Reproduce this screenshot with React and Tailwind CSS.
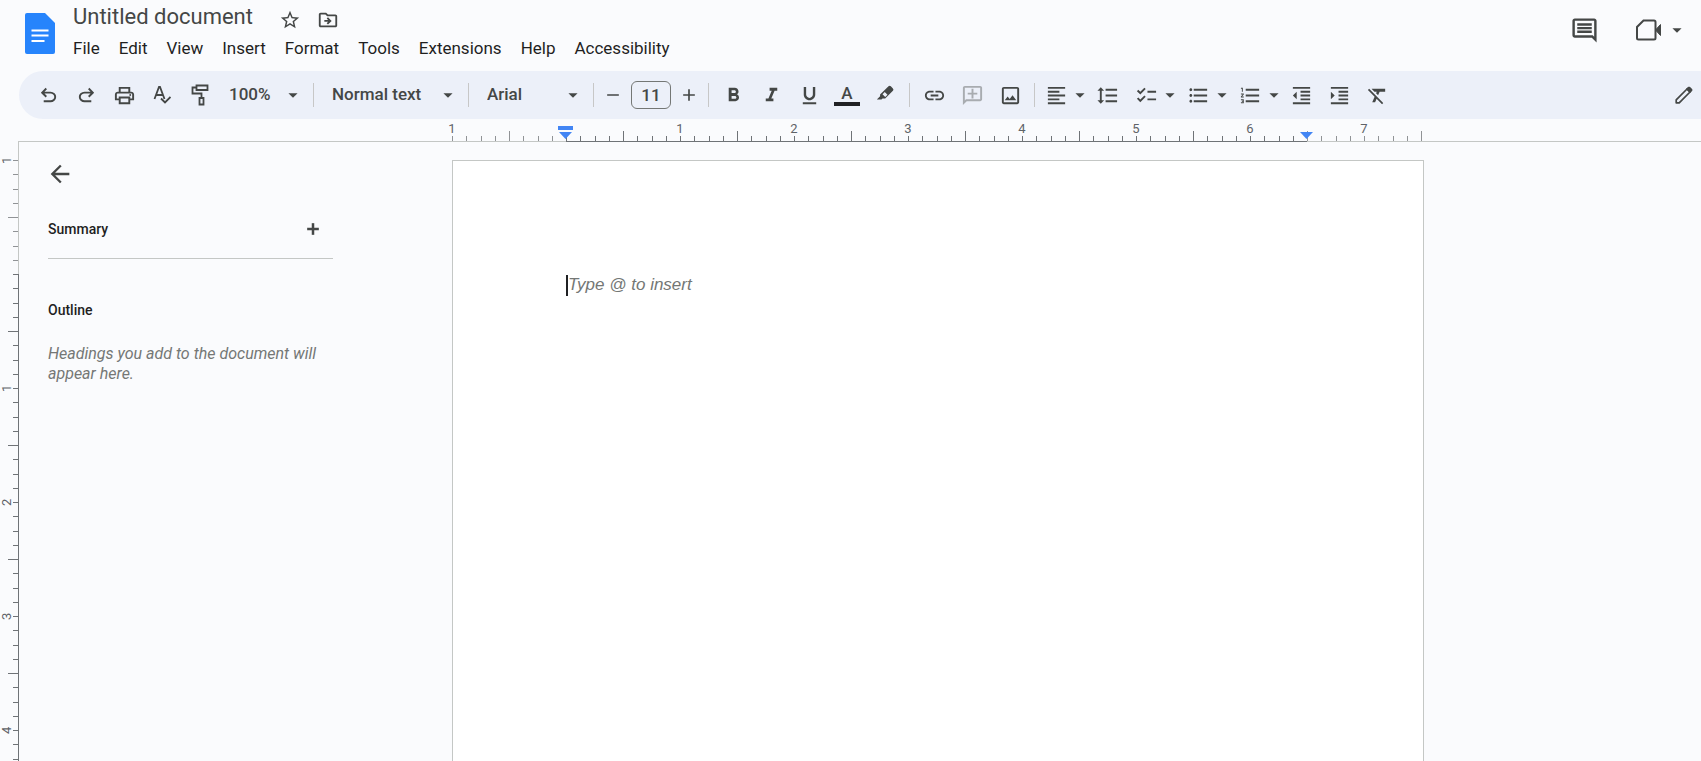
import React, { useState } from 'react';
import { Plus } from 'lucide-react';
import {
  MdAdd,
  MdArrowBack,
  MdArrowDropDown,
  MdChecklist,
  MdFormatAlignLeft,
  MdFormatBold,
  MdFormatClear,
  MdFormatIndentDecrease,
  MdFormatIndentIncrease,
  MdFormatItalic,
  MdFormatLineSpacing,
  MdFormatListBulleted,
  MdFormatListNumbered,
  MdFormatUnderlined,
  MdLink,
  MdOutlineAddComment,
  MdOutlineDriveFileMove,
  MdOutlineImage,
  MdOutlineInsertComment,
  MdOutlinePrint,
  MdRemove,
  MdStarOutline,
} from 'react-icons/md';

const MENUS = ['File', 'Edit', 'View', 'Insert', 'Format', 'Tools', 'Extensions', 'Help', 'Accessibility'];

// Both rulers are divided in eighths of an inch, and start one inch before zero
const H_TICKS = Array.from({ length: 68 }, (_, i) => i - 8);
const V_TICKS = Array.from({ length: 44 }, (_, i) => i - 8);

const DocsLogo = () => (
  <svg viewBox="0 0 30 41" className="w-[30px] h-[41px]">
    <path d="M2 0h18l10 10v29a2 2 0 0 1-2 2H2a2 2 0 0 1-2-2V2a2 2 0 0 1 2-2z" fill="#2684fc" />
    <path d="M6.500 17.500h17M6.500 22.500h17M6.500 28h13" stroke="#fff" strokeWidth="2" />
  </svg>
);

const UndoIcon = ({ className }) => (
  <svg viewBox="0 -960 960 960" fill="currentColor" className={className}>
    <path d="M280-200v-80h284q63 0 109.500-40T720-420q0-60-46.500-100T564-560H312l104 104-56 56-200-200 200-200 56 56-104 104h252q97 0 169.500 63T800-420q0 94-72.500 157T564-200H280Z" />
  </svg>
);

const SpellcheckIcon = ({ className }) => (
  <svg viewBox="0 0 18 20" fill="none" stroke="currentColor" strokeWidth="1.8" className={className}>
    <path d="M1.500 14 6 2h1l4.500 12M3.200 10h6.600" />
    <path d="m8 13.500 4 4 5.500-5.500" />
  </svg>
);

const PaintFormatIcon = ({ className }) => (
  <svg viewBox="0 0 18 22" fill="none" stroke="currentColor" strokeWidth="1.8" className={className}>
    <path d="M5.500 1.500h11v4.500h-11z" />
    <path d="M5.500 3.500H1.500V9.500h9V14" />
    <path d="M8.500 14h4v6.500h-4z" />
  </svg>
);

const HighlightIcon = ({ className }) => (
  <svg viewBox="0 0 24 24" fill="currentColor" className={className}>
    <path
      fillRule="evenodd"
      d="M16.200 1.600a2 2 0 0 1 2.800 0l2.500 2.500a2 2 0 0 1 0 2.800l-9.300 9.300H9l-1.200 1.300H2.200l3.900-4v-2.200zM9 11l3.300 3.300 2.700-2.700-3.300-3.300z"
    />
  </svg>
);

const PencilIcon = ({ className }) => (
  <svg viewBox="0 0 18 18" fill="none" stroke="currentColor" strokeWidth="1.700" strokeLinejoin="round" className={className}>
    <path d="M1.200 16.800v-3L12 3l3 3L4.200 16.800z" />
    <path d="m12 3 1.500-1.500h1L16.500 3.500v1L15 6z" fill="currentColor" />
  </svg>
);

const MeetIcon = ({ className }) => (
  <svg viewBox="0 0 26 22" fill="none" stroke="currentColor" strokeWidth="2" className={className}>
    <path d="M7.500 1.500H18A1.500 1.500 0 0 1 19.500 3v16a1.500 1.500 0 0 1-1.500 1.500H2.500A1.500 1.500 0 0 1 1 19V8z" />
    <path d="M19.500 11l5-5.500v11z" fill="currentColor" strokeWidth="1" />
  </svg>
);

const ToolButton = ({ label, disabled, children }) => (
  <button
    aria-label={label}
    disabled={disabled}
    className="w-8 h-8 mx-[3px] shrink-0 flex items-center justify-center rounded hover:bg-black/5 disabled:opacity-40"
  >
    {children}
  </button>
);

const MenuButton = ({ label, children }) => (
  <div className="flex items-center shrink-0">
    <button aria-label={label} className="w-8 h-8 flex items-center justify-center rounded-l hover:bg-black/5">
      {children}
    </button>
    <button aria-label={`${label} menu`} className="w-4 h-8 flex items-center justify-center rounded-r hover:bg-black/5">
      <MdArrowDropDown className="w-[22px] h-[22px] shrink-0" />
    </button>
  </div>
);

const ToolSelect = ({ label, options, className }) => (
  <label className={`grid items-center shrink-0 mr-1 ${className}`}>
    <select
      aria-label={label}
      className="[grid-area:1/1] appearance-none bg-transparent h-8 px-[10px] text-[17px] font-medium outline-none rounded hover:bg-black/5"
    >
      {options.map((option) => (
        <option key={option}>{option}</option>
      ))}
    </select>
    <MdArrowDropDown className="[grid-area:1/1] justify-self-end w-[22px] h-[22px] pointer-events-none" />
  </label>
);

const Divider = () => <div className="w-px h-6 mx-[5px] shrink-0 bg-[#c7c7c7]" />;

const Header = () => (
  <header className="flex justify-between h-[71px] shrink-0 pl-[25px] pr-[13px]">
    <div className="flex gap-[18px]">
      <div className="pt-[13px]">
        <DocsLogo />
      </div>
      <div>
        <div className="flex items-center h-9">
          <h1 className="text-[22px] leading-7 pb-0.5 text-[#444746]">Untitled document</h1>
          <button aria-label="Star" className="ml-[26px] pt-[3px] text-[#444746]">
            <MdStarOutline className="w-[22px] h-[22px]" />
          </button>
          <button aria-label="Move" className="ml-4 pt-[3px] text-[#444746]">
            <MdOutlineDriveFileMove className="w-[22px] h-[22px]" />
          </button>
        </div>
        <nav className="flex gap-[19px] text-[17px] leading-6">
          {MENUS.map((menu) => (
            <button key={menu}>{menu}</button>
          ))}
        </nav>
      </div>
    </div>
    <div className="flex items-center h-[60px] text-[#444746]">
      <button aria-label="Comments">
        <MdOutlineInsertComment className="w-[29px] h-[29px]" />
      </button>
      <button aria-label="Join a call" className="flex items-center ml-[37px]">
        <MeetIcon className="w-[26px] h-[22px]" />
        <MdArrowDropDown className="ml-1 w-[22px] h-[22px]" />
      </button>
    </div>
  </header>
);

const Toolbar = () => {
  const [fontSize, setFontSize] = useState(11);
  const icon = 'w-[23px] h-[23px]';

  return (
    <div className="flex items-center h-12 shrink-0 ml-[19px] pl-[10px] rounded-l-full bg-[#ecf0f9] text-[#444746] overflow-hidden">
      <ToolButton label="Undo"><UndoIcon className={icon} /></ToolButton>
      <ToolButton label="Redo"><UndoIcon className={`${icon} -scale-x-100`} /></ToolButton>
      <ToolButton label="Print"><MdOutlinePrint className={icon} /></ToolButton>
      <ToolButton label="Spelling"><SpellcheckIcon className="w-[18px] h-5" /></ToolButton>
      <ToolButton label="Paint format"><PaintFormatIcon className="w-[18px] h-[22px]" /></ToolButton>
      <ToolSelect label="Zoom" options={['100%', '75%', '50%']} className="w-[85px]" />
      <Divider />
      <ToolSelect label="Styles" options={['Normal text', 'Title', 'Heading 1']} className="w-[137px] ml-[3px]" />
      <Divider />
      <ToolSelect label="Font" options={['Arial', 'Georgia', 'Verdana']} className="w-[107px] ml-[3px]" />
      <Divider />
      <div className="flex items-center gap-[7px] mx-[3px] shrink-0">
        <button
          aria-label="Decrease font size"
          onClick={() => setFontSize(fontSize - 1)}
          className="w-[22px] flex justify-center"
        >
          <MdRemove className="w-5 h-5" />
        </button>
        <input
          aria-label="Font size"
          value={fontSize}
          onChange={(e) => setFontSize(Number(e.target.value) || 1)}
          className="w-10 h-7 rounded-md border border-[#747775] bg-transparent text-center text-[17px] font-medium outline-none"
        />
        <button
          aria-label="Increase font size"
          onClick={() => setFontSize(fontSize + 1)}
          className="w-[22px] flex justify-center"
        >
          <MdAdd className="w-5 h-5" />
        </button>
      </div>
      <Divider />
      <ToolButton label="Bold"><MdFormatBold className={icon} /></ToolButton>
      <ToolButton label="Italic"><MdFormatItalic className={icon} /></ToolButton>
      <ToolButton label="Underline"><MdFormatUnderlined className={icon} /></ToolButton>
      <ToolButton label="Text color">
        <span className="w-[26px] border-b-4 border-[#202124] text-center text-[17px] leading-[18px] font-medium">A</span>
      </ToolButton>
      <ToolButton label="Highlight color"><HighlightIcon className="w-5 h-5" /></ToolButton>
      <Divider />
      <ToolButton label="Insert link"><MdLink className={icon} /></ToolButton>
      <ToolButton label="Add comment" disabled><MdOutlineAddComment className={`${icon} -scale-x-100`} /></ToolButton>
      <ToolButton label="Insert image"><MdOutlineImage className={icon} /></ToolButton>
      <Divider />
      <MenuButton label="Align"><MdFormatAlignLeft className={icon} /></MenuButton>
      <ToolButton label="Line spacing"><MdFormatLineSpacing className={icon} /></ToolButton>
      <div className="flex gap-1 ml-1">
        <MenuButton label="Checklist"><MdChecklist className={icon} /></MenuButton>
        <MenuButton label="Bulleted list"><MdFormatListBulleted className={icon} /></MenuButton>
        <MenuButton label="Numbered list"><MdFormatListNumbered className={icon} /></MenuButton>
      </div>
      <ToolButton label="Decrease indent"><MdFormatIndentDecrease className={icon} /></ToolButton>
      <ToolButton label="Increase indent"><MdFormatIndentIncrease className={icon} /></ToolButton>
      <ToolButton label="Clear formatting"><MdFormatClear className={icon} /></ToolButton>
      <button aria-label="Editing mode" className="ml-auto mr-2">
        <PencilIcon className="w-[18px] h-[18px]" />
      </button>
    </div>
  );
};

const HorizontalRuler = () => (
  <div className="flex h-[23px] shrink-0 ml-[18px] text-[13px] text-[#5f6368]">
    <div className="w-[434px] shrink-0 border-b border-[#c4c7c5]" />
    <div className="relative flex w-[969px] shrink-0">
      {H_TICKS.map((n) => {
        const active = n >= 0 && n < 52;
        return (
          <div
            key={n}
            className={`flex-1 min-w-0 flex flex-col justify-end border-b ${active ? 'border-[#6f7377]' : 'border-[#c4c7c5]'}`}
          >
            {n % 8 === 0 && n !== 0 && (
              <span className="w-4 -ml-2 text-center leading-[14px]">{Math.abs(n / 8)}</span>
            )}
            <div className={`w-px ${n % 8 !== 0 && n % 4 === 0 ? 'h-[10px]' : 'h-[5px]'} ${active ? 'bg-[#6f7377]' : 'bg-[#909396]'}`} />
          </div>
        );
      })}
      {/* Indent markers */}
      <svg viewBox="0 0 15 14" className="absolute left-[106px] top-[7px] w-[15px] h-[14px]" fill="#4285f4">
        <path d="M0 0h15v4H0zM1 6h13l-6.500 7z" />
      </svg>
      <svg viewBox="0 0 15 14" className="absolute left-[847px] top-[7px] w-[15px] h-[14px]" fill="#4285f4">
        <path d="M1 6h13l-6.500 7z" />
      </svg>
    </div>
    <div className="flex-1 flex items-end border-b border-[#c4c7c5]">
      <div className="w-px h-[10px] bg-[#909396]" />
    </div>
  </div>
);

const VerticalRuler = () => (
  <div className="w-[19px] shrink-0 flex flex-col text-[13px] text-[#5f6368] overflow-hidden">
    <div className="h-[18px] shrink-0 border-r border-[#c4c7c5]" />
    <div className="h-[627px] shrink-0 flex flex-col">
      {V_TICKS.map((n) => (
        <div
          key={n}
          className={`flex-1 min-h-0 flex items-start justify-end border-r ${n >= 0 ? 'border-[#6f7377]' : 'border-[#c4c7c5]'}`}
        >
          {n % 8 === 0 && n !== 0 && (
            <span className="h-4 -mt-2 leading-3 text-center [writing-mode:vertical-rl] rotate-180">{Math.abs(n / 8)}</span>
          )}
          <div className={`h-px shrink-0 ${n % 8 !== 0 && n % 4 === 0 ? 'w-[10px]' : 'w-[5px]'} ${n >= 0 ? 'bg-[#6f7377]' : 'bg-[#909396]'}`} />
        </div>
      ))}
    </div>
    <div className="flex-1 border-r border-[#6f7377]" />
  </div>
);

const OutlinePanel = () => (
  <aside className="w-[433px] shrink-0 pl-[29px] pt-[18px]">
    <button aria-label="Close outline" className="block -ml-0.5 text-[#444746]">
      <MdArrowBack className="w-7 h-7" />
    </button>
    <div className="w-[285px]">
      <div className="flex items-center justify-between h-[71px] pt-6 pb-3 border-b border-[#c4c7c5]">
        <h2 className="text-sm font-medium">Summary</h2>
        <button aria-label="Add summary" className="mr-[10px] text-[#444746]">
          <Plus className="w-5 h-5" strokeWidth={3} strokeLinecap="butt" />
        </button>
      </div>
      <h2 className="mt-[41px] text-sm font-medium">Outline</h2>
      <p className="mt-6 text-base leading-5 italic text-[#747775]">Headings you add to the document will appear here.</p>
    </div>
  </aside>
);

export default function App() {
  return (
    <div className="flex flex-col h-screen overflow-hidden bg-[#fafbfd] text-[#1f1f1f] font-['Roboto',sans-serif]">
      <Header />
      <Toolbar />
      <HorizontalRuler />
      <div className="flex flex-1 min-h-0">
        <VerticalRuler />
        <OutlinePanel />
        <main className="flex w-[972px] shrink-0 mt-[18px] pt-[114px] px-[113px] border border-b-0 border-[#c4c7c5] bg-white">
          <span className="w-0.5 h-[21px] shrink-0 bg-[#202124]" />
          <textarea
            aria-label="Document content"
            placeholder="Type @ to insert"
            className="flex-1 h-full resize-none outline-none font-['Liberation_Sans',Arial,sans-serif] text-[17px] leading-5 placeholder:italic placeholder:text-[#747775]"
          />
        </main>
      </div>
    </div>
  );
}
